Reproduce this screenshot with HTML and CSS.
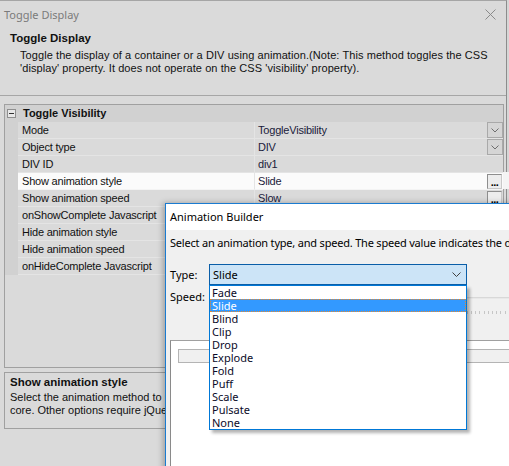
FILE: index.html
```html
<!DOCTYPE html>
<html>
<head>
<meta charset="utf-8">
<link rel="stylesheet" href="styles.css">
</head>
<body>
<div class="window">
  <div class="titlebar">
    <span class="title">Toggle Display</span>
    <svg class="close" viewBox="0 0 11 11"><path d="M0.5 0.5L10.5 10.5M10.5 0.5L0.5 10.5" stroke="#8a8a8a" stroke-width="1"/></svg>
  </div>
  <div class="header">
    <div class="h-title">Toggle Display</div>
    <div class="h-desc">Toggle the display of a container or a DIV using animation.(Note: This method toggles the CSS<br>'display' property. It does not operate on the CSS 'visibility' property).</div>
  </div>
  <div class="grid">
    <div class="cat"><span class="gut"><span class="exp"></span></span><span class="cat-name">Toggle Visibility</span></div>
    <div class="row"><span class="gut"></span><span class="name">Mode</span><span class="val">ToggleVisibility<span class="dd"><svg viewBox="0 0 8 5"><path d="M0.5 0.5L4 4L7.5 0.5" fill="none" stroke="#6e6e6e"/></svg></span></span></div>
    <div class="row"><span class="gut"></span><span class="name">Object type</span><span class="val">DIV<span class="dd"><svg viewBox="0 0 8 5"><path d="M0.5 0.5L4 4L7.5 0.5" fill="none" stroke="#6e6e6e"/></svg></span></span></div>
    <div class="row"><span class="gut"></span><span class="name">DIV ID</span><span class="val">div1</span></div>
    <div class="row sel"><span class="gut"></span><span class="name">Show animation style</span><span class="val">Slide<span class="ell">...</span></span></div>
    <div class="row"><span class="gut"></span><span class="name">Show animation speed</span><span class="val">Slow<span class="ell">...</span></span></div>
    <div class="row"><span class="gut"></span><span class="name">onShowComplete Javascript</span><span class="val"></span></div>
    <div class="row"><span class="gut"></span><span class="name">Hide animation style</span><span class="val"></span></div>
    <div class="row"><span class="gut"></span><span class="name">Hide animation speed</span><span class="val"></span></div>
    <div class="row"><span class="gut"></span><span class="name">onHideComplete Javascript</span><span class="val"></span></div>
  </div>
  <div class="help">
    <div class="help-title">Show animation style</div>
    <div class="help-desc">Select the animation method to use. Fade and Slide are in jQuery<br>core. Other options require jQuery UI.</div>
  </div>

  <div class="dialog">
    <div class="dlg-title">Animation Builder</div>
    <div class="dlg-body">
      <div class="dlg-text">Select an animation type, and speed. The speed value indicates the duration.</div>
      <div class="type-row">
        <span class="lbl">Type:</span>
        <div class="combo"><span>Slide</span><svg viewBox="0 0 9 5"><path d="M0.5 0.5L4.5 4.5L8.5 0.5" fill="none" stroke="#404040"/></svg></div>
      </div>
      <div class="speed-row">
        <span class="lbl">Speed:</span>
        <div class="slider"><div class="track"></div><div class="ticks"></div></div>
      </div>
      <div class="panel"><div class="bar"></div></div>
    </div>
    <div class="list">
      <div class="item">Fade</div>
      <div class="item sel">Slide</div>
      <div class="item">Blind</div>
      <div class="item">Clip</div>
      <div class="item">Drop</div>
      <div class="item">Explode</div>
      <div class="item">Fold</div>
      <div class="item">Puff</div>
      <div class="item">Scale</div>
      <div class="item">Pulsate</div>
      <div class="item">None</div>
    </div>
  </div>
</div>
</body>
</html>
```

FILE: styles.css
```css
* { box-sizing: border-box; margin: 0; padding: 0; }
html, body { width: 509px; height: 466px; overflow: hidden; }
body {
  background: #d6d6d6;
  font-family: "Liberation Sans", Arial, sans-serif;
  font-size: 11px;
  color: #000;
}
.window {
  position: relative;
  width: 507px;
  height: 466px;
  background: #dadada;
  border-top: 1px solid #a5a5a5;
  border-right: 1px solid #8c8c8c;
}
.titlebar {
  height: 26px;
  display: flex;
  align-items: center;
  justify-content: space-between;
  padding: 0 10px 0 4px;
}
.titlebar .title {
  font-family: "Noto Sans", sans-serif;
  font-size: 11px;
  color: #7b7b7b;
}
.close { width: 11px; height: 11px; display: block; }
.header {
  height: 69px;
  border-bottom: 1px solid #a6a6a6;
  padding-top: 4px;
}
.h-title {
  font-weight: bold;
  font-size: 11.5px;
  line-height: 14px;
  padding-left: 10px;
  color: #111;
}
.h-desc {
  padding-left: 20px;
  margin-top: 4px;
  line-height: 13px;
  letter-spacing: 0.08px;
  color: #111;
}
.grid {
  margin: 8px 0 0 4px;
  width: 500px;
  height: 264px;
  border: 1px solid #a0a0a0;
  background: #dadada;
}
.cat, .row {
  display: flex;
  height: 17px;
}
.gut {
  width: 13px;
  flex: none;
  background: #d1d1d1;
  display: flex;
  align-items: center;
  padding-left: 2px;
}
.cat { background: #d1d1d1; }
.exp {
  width: 9px;
  height: 9px;
  border: 1px solid #8f8f8f;
  background: #e8e8e8;
  position: relative;
  margin-top: -1px;
}
.exp::after {
  content: "";
  position: absolute;
  left: 1px;
  top: 3px;
  width: 5px;
  height: 1px;
  background: #333;
}
.cat-name {
  font-weight: bold;
  padding-left: 5px;
  line-height: 16px;
  color: #111;
}
.name {
  width: 237px;
  flex: none;
  padding-left: 4px;
  line-height: 16px;
  letter-spacing: -0.2px;
  border-right: 1px solid #e4e4e4;
  border-bottom: 1px solid #e4e4e4;
  color: #111;
}
.val {
  flex: 1;
  padding-left: 3px;
  line-height: 16px;
  letter-spacing: -0.2px;
  border-bottom: 1px solid #e4e4e4;
  display: flex;
  justify-content: space-between;
  color: #1a1a3a;
}
.row.sel .name, .row.sel .val {
  background: #fbfbfb;
  border-bottom-color: #f4f4f4;
}
.row.sel { box-shadow: 13px -1px 0 #f4f4f4; }
.dd {
  width: 16px;
  height: 16px;
  border: 1px solid #a9a9a9;
  background: #d5d5d5;
  display: flex;
  align-items: center;
  justify-content: center;
}
.dd svg { width: 8px; height: 5px; display: block; }
.ell {
  width: 15px;
  height: 15px;
  margin: 1px 1px 0 0;
  border: 1px solid #8e8e8e;
  border-right-color: #c8c8c8;
  border-bottom-color: #c8c8c8;
  background: #ededed;
  font-weight: bold;
  font-size: 11px;
  line-height: 14px;
  text-align: center;
  letter-spacing: -0.5px;
  color: #000;
}
.help {
  margin: 4px 0 0 4px;
  width: 500px;
  height: 57px;
  border: 1px solid #a0a0a0;
  padding: 2px 0 0 5px;
}
.help-title {
  font-weight: bold;
  font-size: 11.5px;
  line-height: 14px;
  color: #111;
}
.help-desc {
  margin-top: 2px;
  line-height: 13px;
  color: #111;
}

/* Animation Builder dialog */
.dialog {
  position: absolute;
  left: 165px;
  top: 202px;
  width: 380px;
  height: 300px;
  background: #f0f0f0;
  border-top: 1px solid #1a7bd0;
  border-left: 1px solid #1a7bd0;
  box-shadow: -2px 0 6px rgba(0, 0, 0, 0.28);
  font-family: "Noto Sans", sans-serif;
  font-size: 11px;
  color: #000;
}
.dlg-title {
  height: 26px;
  line-height: 26px;
  background: #fff;
  padding-left: 4px;
}
.dlg-body { padding: 5px 0 0 4px; }
.dlg-text { line-height: 15px; white-space: nowrap; letter-spacing: -0.2px; }
.type-row {
  display: flex;
  align-items: center;
  margin-top: 14px;
  height: 21px;
}
.lbl { width: 39px; flex: none; }
.combo {
  width: 258px;
  height: 21px;
  border: 1px solid #0a5ea8;
  background: #cce4f7;
  display: flex;
  align-items: center;
  justify-content: space-between;
  padding: 0 5px 0 3px;
}
.combo svg { width: 9px; height: 5px; display: block; }
.speed-row {
  display: flex;
  margin-top: 5px;
  height: 26px;
  line-height: 14px;
}
.slider { flex: 1; position: relative; }
.track {
  position: absolute;
  left: 6px;
  right: 0;
  top: 7px;
  height: 2px;
  border-top: 1px solid #d8d8d8;
  background: #e8e8e8;
}
.ticks {
  position: absolute;
  left: 10px;
  right: 0;
  top: 21px;
  height: 3px;
  background: repeating-linear-gradient(90deg, #c6c6c6 0 1px, transparent 1px 4.2px);
}
.panel {
  margin-top: 24px;
  height: 200px;
  border: 1px solid #a0a0a0;
  border-left-color: #8a8a8a;
  background: #fff;
  padding: 8px 0 0 7px;
}
.bar {
  height: 14px;
  border: 1px solid #b4b4b4;
  background: #f0f0f0;
}
.list {
  position: absolute;
  left: 43px;
  top: 81px;
  width: 258px;
  height: 145px;
  background: #fff;
  border: 1px solid #0078d7;
  box-shadow: 3px 3px 3px rgba(0, 0, 0, 0.3);
  font-size: 11px;
}
.item {
  height: 13px;
  line-height: 13px;
  padding-left: 2px;
  color: #0a0a28;
}
.item.sel {
  background: #3399ff;
  color: #fff;
  outline: 1px dotted #e8892c;
  outline-offset: -1px;
}
```
